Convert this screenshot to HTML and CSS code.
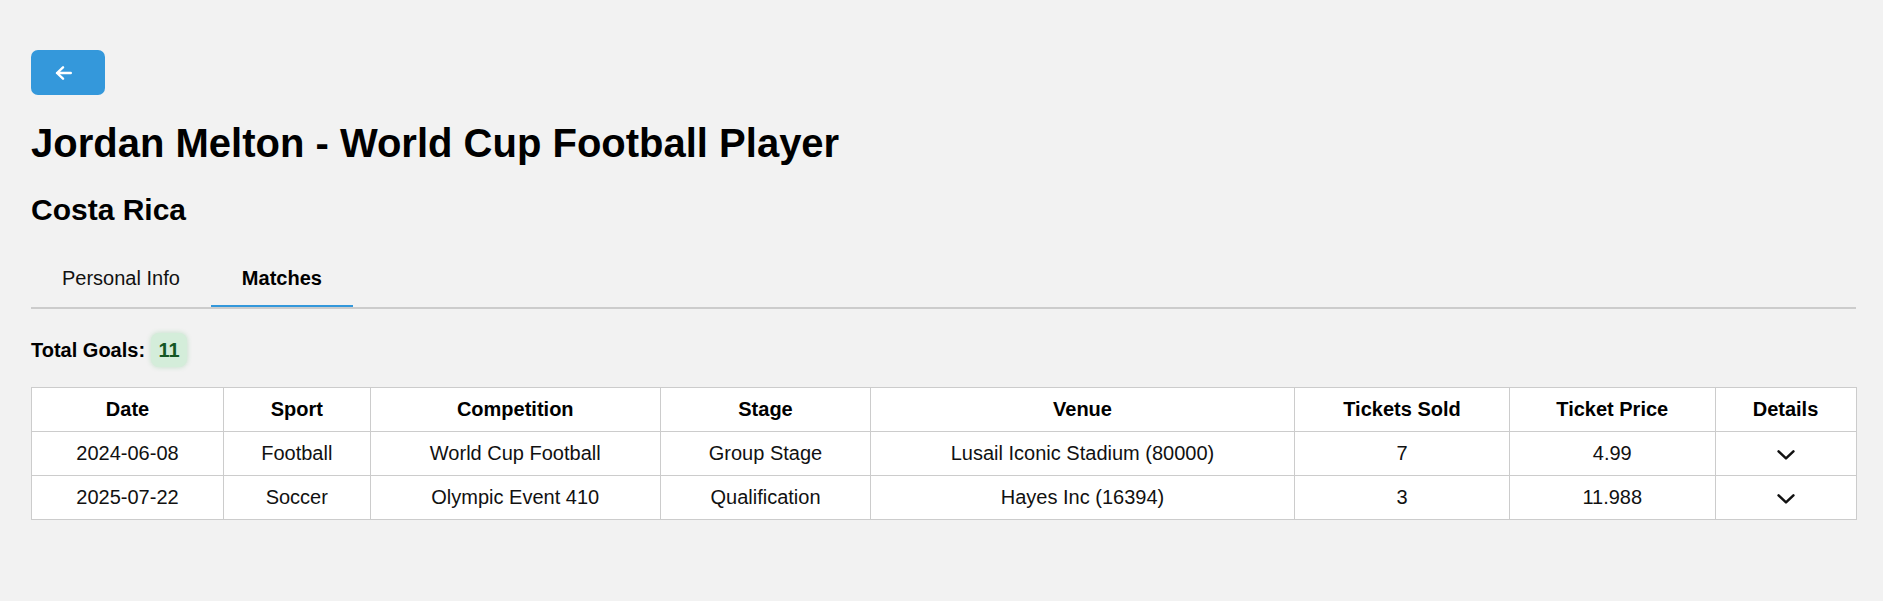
FILE: index.html
```html
<!DOCTYPE html>
<html lang="en">
<head>
<meta charset="utf-8">
<title>Jordan Melton - World Cup Football Player</title>
<link rel="stylesheet" href="styles.css">
</head>
<body>
<div class="page">
  <button class="back-btn" type="button" aria-label="Back">
    <svg class="back-icon" width="17" height="14" viewBox="0 0 17 14" aria-hidden="true">
      <path d="M2 7 H15.8 M8 1.3 L2 7 L8 12.7" fill="none" stroke="#fff" stroke-width="2.4" stroke-linecap="round" stroke-linejoin="round"/>
    </svg>
  </button>
  <h1 class="title">Jordan Melton - World Cup Football Player</h1>
  <h2 class="country">Costa Rica</h2>
  <div class="tabs">
    <div class="tab">Personal Info</div>
    <div class="tab tab-active">Matches</div>
  </div>
  <div class="goals">
    <span class="goals-label">Total Goals:</span>
    <span class="goals-badge">11</span>
  </div>
  <table class="matches">
    <colgroup>
      <col class="c-date"><col class="c-sport"><col class="c-comp"><col class="c-stage"><col class="c-venue"><col class="c-sold"><col class="c-price"><col class="c-details">
    </colgroup>
    <thead>
      <tr><th>Date</th><th>Sport</th><th>Competition</th><th>Stage</th><th>Venue</th><th>Tickets Sold</th><th>Ticket Price</th><th>Details</th></tr>
    </thead>
    <tbody>
      <tr>
        <td>2024-06-08</td><td>Football</td><td>World Cup Football</td><td>Group Stage</td><td>Lusail Iconic Stadium (80000)</td><td>7</td><td>4.99</td>
        <td><svg class="chev" width="18" height="10" viewBox="0 0 18 10" aria-hidden="true"><polyline points="1.6,1.4 9,8.4 16.4,1.4" fill="none" stroke="#111" stroke-width="2.5" stroke-linecap="round" stroke-linejoin="round"/></svg></td>
      </tr>
      <tr>
        <td>2025-07-22</td><td>Soccer</td><td>Olympic Event 410</td><td>Qualification</td><td>Hayes Inc (16394)</td><td>3</td><td>11.988</td>
        <td><svg class="chev" width="18" height="10" viewBox="0 0 18 10" aria-hidden="true"><polyline points="1.6,1.4 9,8.4 16.4,1.4" fill="none" stroke="#111" stroke-width="2.5" stroke-linecap="round" stroke-linejoin="round"/></svg></td>
      </tr>
    </tbody>
  </table>
</div>
</body>
</html>
```

FILE: styles.css
```css
html, body {
  margin: 0;
  padding: 0;
  background: #f2f2f2;
}
body {
  font-family: "Liberation Sans", Arial, sans-serif;
  font-size: 20px;
  color: #111;
}
.page {
  padding: 50px 27px 40px 31px;
}
.back-btn {
  display: flex;
  align-items: center;
  width: 74px;
  height: 45px;
  padding: 0 0 0 24px;
  margin: 0;
  border: none;
  border-radius: 7px;
  background: #3498db;
  cursor: pointer;
}
.back-icon {
  display: block;
}
.title {
  margin: 25px 0 0 0;
  font-size: 40px;
  font-weight: bold;
  line-height: 46px;
  color: #000;
}
.country {
  margin: 26px 0 0 0;
  font-size: 30px;
  font-weight: bold;
  line-height: 35px;
  color: #000;
}
.tabs {
  display: flex;
  margin-top: 25px;
  border-bottom: 2px solid #cccccc;
}
.tab {
  padding: 15px 31px 15px 31px;
  line-height: 23px;
  border-bottom: 2.5px solid transparent;
  color: #111;
}
.tab-active {
  font-weight: bold;
  border-bottom-color: #3498db;
  color: #000;
}
.goals {
  display: flex;
  align-items: center;
  margin-top: 24px;
  margin-bottom: 20px;
}
.goals-label {
  font-weight: bold;
  font-size: 20px;
  color: #000;
}
.goals-badge {
  margin-left: 6px;
  padding: 5.5px 7.5px;
  line-height: 23px;
  font-weight: bold;
  font-size: 20px;
  color: #155724;
  background: #d4edda;
  border-radius: 8px;
  box-shadow: 0 0 5px rgba(40, 167, 69, 0.25);
}
.matches {
  width: 1825px;
  table-layout: fixed;
  border-collapse: collapse;
  background: #fff;
}
.c-date { width: 192px; }
.c-sport { width: 146.5px; }
.c-comp { width: 290.5px; }
.c-stage { width: 210px; }
.c-venue { width: 424px; }
.c-sold { width: 215px; }
.c-price { width: 205.5px; }
.c-details { width: 141px; }
.matches th,
.matches td {
  border: 1px solid #cccccc;
  padding: 10px;
  line-height: 23px;
  text-align: center;
  font-size: 20px;
}
.matches th {
  font-weight: bold;
  color: #000;
}
.matches td {
  color: #111;
}
.chev {
  display: inline-block;
  vertical-align: middle;
}
```
